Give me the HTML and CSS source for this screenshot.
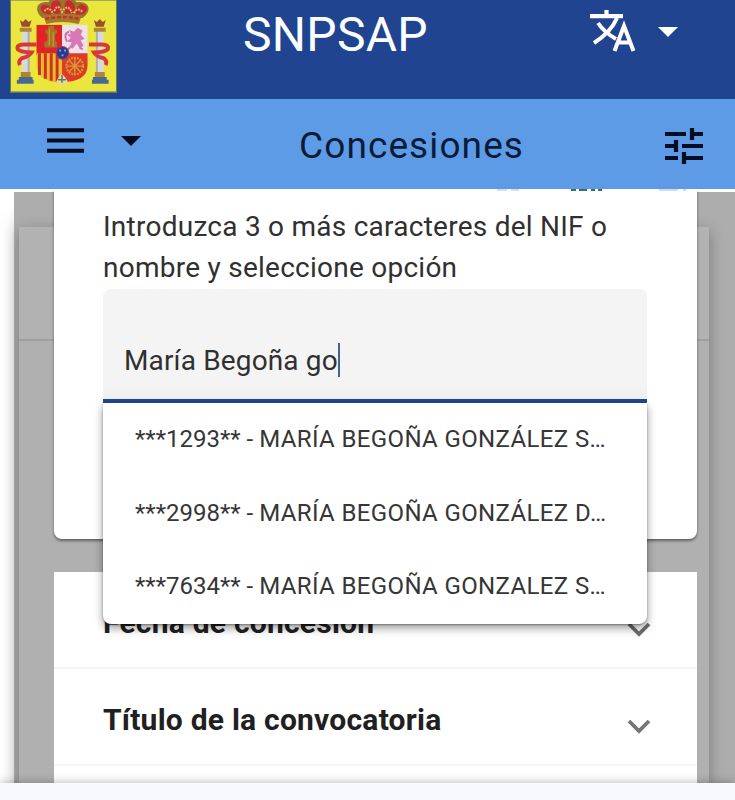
FILE: index.html
```
<!DOCTYPE html>
<html lang="es">
<head>
<meta charset="utf-8">
<title>SNPSAP - Concesiones</title>
<link rel="stylesheet" href="styles.css">
</head>
<body>
<div class="app">
  <header class="topbar">
    <svg class="crest" viewBox="0 0 107 93" aria-hidden="true">
      <rect width="107" height="93" fill="#ebe63e"/>
      <g>
        <path d="M32 18C22 10 27 0 38 2L42-3h20l5 5c12-2 17 8 6 16z" fill="#98752b"/>
        <path d="M33 13C27 7 32 2 38 5q4 3 3 10zM42 15Q37 0 48 0q5 4 2 14zM55 14Q53 0 59 0q9 3 5 15zM66 15Q66 5 72 4q10 3 2 10z" fill="#c72b32"/>
        <path d="M34 11q5-6 9 3M44 11q4-9 8 1 6-10 10 1M64 13q4-7 9-1" fill="none" stroke="#e0c252" stroke-width="2" stroke-dasharray="2 1"/>
        <path d="M33 16q20-5 39 0l-3 8q-17-4-33 0z" fill="#a27a2c"/>
        <path d="M35 19q18-4 35 0" fill="none" stroke="#c92d31" stroke-width="2.5" stroke-dasharray="4 2"/>
      </g>
      <g>
        <path d="M26 25h26v31H26z" fill="#df2427"/>
        <path d="M52 25h26v31H52z" fill="#eee2e9"/>
        <path d="M26 54h26v30Q26 83 26 66z" fill="#e8bd2c"/>
        <path d="M29 54v22M35 54v26M41 54v28M47 54v29" stroke="#ce3026" stroke-width="3"/>
        <path d="M52 54h26v12q0 17-26 17z" fill="#dc3c27"/>
        <path d="M34 48h13v-5l-2-2v-6l2-2v-3h-3v-4h-6v4h-3v3l2 2v6l-3 2z" fill="#a47324"/>
        <path d="M39 29v17M43 32v15" stroke="#d2a33b"/>
        <path d="m59 30 5 2 4-4 5 3-2 4 4 4-4 2 3 5-4 3-3-5-4 5-4-1 3-5-5-1 4-4-4-3 4-1z" fill="#d778b4"/>
        <path d="M57 42q-4-8 2-10M70 48l3 2M60 48l-2 2" fill="none" stroke="#cf6ead" stroke-width="2"/>
        <circle cx="65" cy="67" r="8.5" fill="none" stroke="#d69a32" stroke-width="2" stroke-dasharray="2 1"/>
        <path d="M57 67h16M65 59v16M59 61l12 12M71 61 59 73" stroke="#d69a32" stroke-width="1.4"/>
        <path d="M46 83q2-5 6-8 4 3 6 8l-6 3z" fill="#ded8be"/>
        <path d="M52 76v8M48 81h8" stroke="#6f7541" stroke-width="1.500"/>
        <circle cx="52.500" cy="53.500" r="6.500" fill="#233d93" stroke="#bb3552"/>
        <path d="M49 51h2M54 51h2M51.500 56h2" stroke="#9299b6" stroke-width="2"/>
      </g>
      <g id="pillar">
        <path d="M11 31h8v46h-8z" fill="#d7dad9"/>
        <path d="M17 31h2v46h-2z" fill="#a9afa9"/>
        <path d="M9 28h12v4H9zM10 73h10v5H10z" fill="#b18433"/>
        <path d="m9 20 3 2 3-3 3 3 3-2-2 7h-8z" fill="#98502b"/>
        <path d="M8 78h14v3H8zM6 81h17v4H6z" fill="#466a91"/>
        <path d="M26 45H13q-8 0-6 5 3 3 14 3-2 4-10 6-4 3-2 7" fill="none" stroke="#d93836" stroke-width="4"/>
      </g>
      <use href="#pillar" transform="translate(105.500 0) scale(-1 1)"/>
    </svg>
    <h1 class="brand">SNPSAP</h1>
    <div class="lang">
      <svg class="translate" viewBox="0 0 46 42" fill="none" stroke="#fff">
        <path d="M0 6.200h33M16.500 0v7" stroke-width="4.200"/>
        <path d="M27 8Q21 22 4 33M8 13Q14 22 26 29" stroke-width="4"/>
        <path d="m24.500 41 9.500-25 9.500 25M28 32.500h12" stroke-width="4"/>
      </svg>
      <svg class="caret" viewBox="0 0 20 10"><path d="M0 0h20L10 10z" fill="#fff"/></svg>
    </div>
  </header>
  <nav class="subbar">
    <div class="menu">
      <svg class="burger" viewBox="0 0 37 25"><path d="M0 2.300h37M0 12.500h37M0 22.700h37" stroke="#030d21" stroke-width="4"/></svg>
      <svg class="caret" viewBox="0 0 20 10"><path d="M0 0h20L10 10z" fill="#030d21"/></svg>
    </div>
    <h2 class="section">Concesiones</h2>
    <svg class="tune" viewBox="0 0 38 38" fill="none" stroke="#030d21" stroke-width="4.200">
      <path d="M0 7h21M27 7h11M27 1v12M0 19h11M11 13v12M17 19h21M0 31h13M19 31h19M19 25v12"/>
    </svg>
  </nav>
  <main class="page">
    <div class="backdrop"><div class="sheet"><div class="sheet-head"></div></div></div>
    <div class="cards">
      <section class="card filter">
        <svg class="peek" viewBox="0 0 200 4"><path d="M52 0" /><path d="M4 1h10M18 1h8" stroke="#c8d4dd" stroke-width="1.500"/><path d="M78 1h5M86 1h8M98 1h4M105 1h4" stroke="#3d6d69" stroke-width="2"/><path d="M166 1h19M190 1h3" stroke="#bfd2e6" stroke-width="1.500"/></svg>
        <label class="hint">Introduzca 3 o más caracteres del NIF o<br>nombre y seleccione opción</label>
        <div class="field"><span class="typed">María Begoña go</span><i class="cursor"></i>
          <ul class="options">
            <li>***1293** - <span class="name">MARÍA BEGOÑA GONZÁLEZ S…</span></li>
            <li>***2998** - <span class="name">MARÍA BEGOÑA GONZÁLEZ D…</span></li>
            <li>***7634** - <span class="name">MARÍA BEGOÑA GONZALEZ S…</span></li>
          </ul>
        </div>
      </section>
      <section class="card accordion">
        <div class="row"><span>Fecha de concesión</span><svg class="chev" viewBox="0 0 24 15"><path d="m2 2 10 10L22 2" fill="none" stroke="#6d6d6d" stroke-width="3.800"/></svg></div>
        <div class="row"><span>Título de la convocatoria</span><svg class="chev" viewBox="0 0 24 15"><path d="m2 2 10 10L22 2" fill="none" stroke="#757575" stroke-width="3.800"/></svg></div>
        <div class="row"></div>
      </section>
    </div>
  </main>
  <footer class="bottom"></footer>
</div>
</body>
</html>
```
FILE: styles.css
```
* { box-sizing: border-box; }
body { margin: 0; font-family: Roboto, sans-serif; color: #303030; }
h1, h2, ul { margin: 0; padding: 0; font-weight: 400; list-style: none; }
svg { display: block; flex: none; }
.app { width: 735px; height: 800px; display: flex; flex-direction: column; overflow: hidden; }

.topbar { height: 99px; flex: none; background: #20448f; display: flex; align-items: flex-start; }
.crest { width: 107px; height: 93px; margin-left: 10px; border: solid #657d55; border-width: 0 1px 1px; }
.brand { width: 182px; margin-left: 126px; color: #fbfdff; font-size: 48px; line-height: 56px; margin-top: 7px; letter-spacing: .3px; white-space: nowrap; }
.lang { display: flex; margin: 10px 0 0 165px; gap: 22px; }
.translate { width: 46px; height: 42px; }
.caret { width: 20px; height: 10px; margin-top: 17px; }

.subbar { height: 90px; flex: none; background: #5e9be6; display: flex; }
.menu { display: flex; padding: 29px 0 0 47px; width: 299px; gap: 37px; }
.menu .caret { margin-top: 8px; }
.burger { width: 37px; height: 25px; }
.section { width: 224px; color: #091b38; font-size: 37px; line-height: 44px; margin-top: 25px; letter-spacing: 1.1px; white-space: nowrap; }
.tune { width: 38px; height: 38px; margin: 28px 0 0 142px; }

.page { flex: 1; min-height: 0; display: grid; grid-template: 594px / 735px; overflow: hidden; background: #fff; }
.backdrop { grid-area: 1 / 1; margin: 3px 0 0 14px; padding: 35px 26px 0 5px; position: relative; background: #adadad; box-shadow: -2px 22px 16px -4px rgba(0,0,0,.2); }
.sheet { height: 560px; background: #b0b0b0; box-shadow: 0 4px 14px rgba(0,0,0,.3); }
.sheet-head { height: 114px; background: #b2b2b2; border-bottom: 2px solid #9e9e9e; }
.cards { grid-area: 1 / 1; margin: 0 38px 0 54px; position: relative; }
.card { background: #fff; }
.filter { height: 350px; padding: 0 50px 0 49px; border-radius: 0 0 8px 8px; box-shadow: 0 2px 3px rgba(0,0,0,.45); position: relative; z-index: 1; }
.peek { width: 200px; height: 4px; margin-left: 390px; }
.hint { display: block; padding-top: 13px; font-size: 28px; line-height: 41px; letter-spacing: .25px; white-space: nowrap; }
.field { position: relative; height: 114px; margin-top: 1px; padding: 51px 0 0 21px; display: flex; background: linear-gradient(#f4f4f4 85%, #eeefef); border-radius: 8px 8px 0 0; border-bottom: 4px solid #24478c; font-size: 28px; line-height: 42px; color: #303030; }
.typed { letter-spacing: .15px; white-space: nowrap; }
.cursor { width: 2px; height: 34px; margin-top: 3px; background: #45628e; }
.options { position: absolute; top: 114px; left: 0; right: 0; height: 221px; background: #fff; border-radius: 0 0 8px 8px; box-shadow: 0 4px 10px rgba(0,0,0,.4), 0 1px 2px rgba(0,0,0,.35); font-size: 24px; }
.options li { height: 73.500px; padding: 0 0 0 32px; line-height: 73.500px; white-space: nowrap; color: #363636; }
.name { letter-spacing: .38px; }

.accordion { margin-top: 33px; height: 240px; }
.row { height: 97px; display: flex; justify-content: space-between; align-items: center; padding: 5px 46px 0 49px; font-size: 30px; letter-spacing: .23px; font-weight: 700; color: #202020; border-bottom: 2px solid #f6f6f6; white-space: nowrap; }
.chev { width: 24px; height: 15px; margin-top: 14px; }
.bottom { height: 17px; flex: none; background: #f7f9fe; box-shadow: 0 -1px 8px rgba(0,0,0,.25); position: relative; }
```
